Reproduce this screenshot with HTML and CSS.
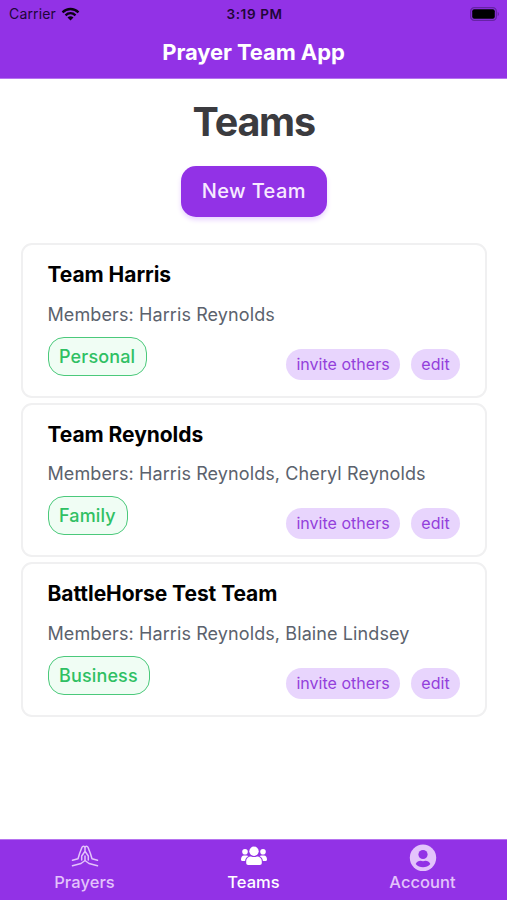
FILE: index.html
```html
<!DOCTYPE html>
<html lang="en">
<head>
<meta charset="utf-8">
<title>Prayer Team App</title>
<link rel="stylesheet" href="styles.css">
</head>
<body>
<header class="header">
  <div class="status">
    <div class="carrier"><span>Carrier</span>
      <svg class="wifi" viewBox="0 0 18 14"><path d="M1 5.3C5.6.9 12.4.9 17 5.3M4 8.3c3-2.8 7-2.8 10 0" fill="none" stroke="currentColor" stroke-width="2.3"/><path d="M6 10.5c1.8-1.6 4.2-1.6 6 0L9 13.5z" fill="currentColor"/></svg>
    </div>
    <span class="time">3:19 PM</span>
    <svg class="battery" viewBox="0 0 30 14"><rect x=".7" y=".7" width="25.6" height="12.6" rx="3.6" fill="none" stroke="#6623a5" stroke-width="1.3"/><rect x="2.2" y="2.2" width="22.6" height="9.6" rx="2" fill="#000"/><path d="M27.7 4.8c1.7.7 1.7 3.7 0 4.4z" fill="#6623a5"/></svg>
  </div>
  <div class="app-title"><span>Prayer Team App</span></div>
</header>
<main class="content">
  <h1 class="heading">Teams</h1>
  <button class="new-team">New Team</button>
  <section class="teams">
    <article class="card">
      <h2 class="name">Team Harris</h2>
      <p class="members">Members: Harris Reynolds</p>
      <div class="row"><span class="tag">Personal</span><div class="actions"><a class="pill">invite others</a><a class="pill">edit</a></div></div>
    </article>
    <article class="card">
      <h2 class="name">Team Reynolds</h2>
      <p class="members">Members: Harris Reynolds, Cheryl Reynolds</p>
      <div class="row"><span class="tag">Family</span><div class="actions"><a class="pill">invite others</a><a class="pill">edit</a></div></div>
    </article>
    <article class="card">
      <h2 class="name">BattleHorse Test Team</h2>
      <p class="members">Members: Harris Reynolds, Blaine Lindsey</p>
      <div class="row"><span class="tag">Business</span><div class="actions"><a class="pill">invite others</a><a class="pill">edit</a></div></div>
    </article>
  </section>
</main>
<nav class="tabs">
  <a class="tab">
    <svg class="icon" viewBox="0 0 28 28"><g fill="none" stroke="currentColor" stroke-width="1.5" stroke-linejoin="round" stroke-linecap="round"><path d="M1.500 17.200l5.500-1.400 1.600-5.300L11 4.300c.7-1.600 2.600-1.300 3 0 .4-1.300 2.300-1.600 3 0l2.400 6.200 1.600 5.300 5.500 1.400"/><path d="M1.500 22.800l8.500-2.300 4-3 4 3 8.500 2.300M14 4.800v3.500M14 17v-4M10.700 17v-4L14 8.300l3.300 4.700v4"/></g></svg>
    <span>Prayers</span>
  </a>
  <a class="tab active">
    <svg class="icon" viewBox="0 0 28 28"><g fill="currentColor" transform="translate(0 -1)"><circle cx="14" cy="9.300" r="4.700"/><circle cx="5" cy="9.700" r="2.800"/><circle cx="23" cy="9.700" r="2.800"/><path d="M6.200 21v-1.500c0-3.400 2.400-5 4.800-5 2 .8 4 .8 6 0 2.400 0 4.800 1.600 4.800 5V21c0 1.200-.8 2-2 2H8.200c-1.200 0-2-.8-2-2zM4 13.500h2.500c.8 0 1.400.2 2 .6-2 1.100-3.100 2.700-3.400 4.900H2.200c-.8 0-1.200-.5-1.200-1.200 0-2.400 1-4.300 3-4.300zM24 13.500h-2.500c-.8 0-1.400.2-2 .6 2 1.100 3.100 2.700 3.400 4.900h2.900c.8 0 1.200-.5 1.200-1.200 0-2.400-1-4.300-3-4.300z"/></g></svg>
    <span>Teams</span>
  </a>
  <a class="tab">
    <svg class="icon" viewBox="0 0 28 28"><circle cx="14" cy="14.800" r="13.200" fill="currentColor"/><circle cx="14" cy="11.500" r="4.600" fill="#9232e6"/><path d="M6.700 21c1-2 2.900-3.200 4.800-3.200 1.700.6 3.300.6 5 0 1.900 0 3.800 1.200 4.800 3.200-3.600 4.300-11 4.300-14.600 0z" fill="#9232e6"/></svg>
    <span>Account</span>
  </a>
</nav>
</body>
</html>
```
FILE: styles.css
```css
* { box-sizing: border-box; margin: 0; }
body {
  height: 900px;
  display: flex;
  flex-direction: column;
  background: #fff;
  font-family: Inter, "Liberation Sans", sans-serif;
  overflow: hidden;
}
.header { height: 79px; flex: none; background: #9232e6; border-bottom: 1px solid #b673f0; }
.status {
  height: 27px;
  padding: 0 7px 0 9px;
  display: grid;
  grid-template-columns: 1fr auto 1fr;
  align-items: center;
  font-size: 14px;
  color: #200638;
}
.carrier { display: flex; align-items: center; gap: 5px; letter-spacing: .15px; }
.wifi { width: 19px; height: 14px; color: #0b0213; }
.time { font-weight: 600; letter-spacing: .6px; font-size: 13.500px; }
.battery { width: 30px; height: 14px; justify-self: end; }
.app-title {
  height: 50px;
  display: flex;
  align-items: center;
  justify-content: center;
  color: #fff;
  font-size: 22px;
  font-weight: 700;
  letter-spacing: -.1px;
}
.content { flex: 1; padding: 0 20px 0 20.500px; display: flex; flex-direction: column; align-items: center; }
.heading { margin-top: 18px; font-size: 39.500px; line-height: 50px; font-weight: 700; letter-spacing: -1.200px; color: #3b3b3f; }
.new-team {
  margin-top: 19px;
  width: 146px;
  height: 51px;
  flex: none;
  border: 0;
  border-radius: 15px;
  background: #9232e6;
  color: #f7eaff;
  font: 500 20px/24px Inter, sans-serif;
  padding: 0 0 1px;
  letter-spacing: .4px;
  box-shadow: 0 3px 5px #e9d5ff;
}
.teams { align-self: stretch; margin-top: 26px; display: flex; flex-direction: column; gap: 5px; }
.card { height: 154.500px; padding: 17px 25px 0; border: 2px solid #f0f0f1; border-radius: 11px; }
.name { font-size: 21px; line-height: 26px; font-weight: 700; letter-spacing: -.06px; color: #000; }
.members { margin-top: 14.500px; font-size: 18px; line-height: 24px; letter-spacing: .1px; color: #5b626d; white-space: nowrap; }
.row { margin-top: 10.200px; display: flex; justify-content: space-between; align-items: flex-start; }
.tag {
  height: 39px;
  padding: 0 11px 0 10.500px;
  border: 1.500px solid #4bc97b;
  border-radius: 16px;
  background: #f0fdf4;
  color: #2fc063;
  font-size: 18px;
  font-weight: 500;
  line-height: 37px;
  letter-spacing: .14px;
}
.actions { display: flex; gap: 11px; margin-top: 12px; }
.pill {
  height: 31px;
  padding: 0 10.300px;
  border-radius: 16px;
  background: #e8d5fd;
  color: #9340db;
  font-size: 16px;
  line-height: 31px;
  letter-spacing: .03px;
}
.tabs { height: 61px; flex: none; display: grid; grid-template-columns: repeat(3, 1fr); background: #9232e6; border-top: 1px solid #b673f0; }
.tab { display: flex; flex-direction: column; align-items: center; padding-top: 3px; color: #e3c3fb; font-size: 16.500px; font-weight: 500; line-height: 22px; letter-spacing: .06px; }
.active { color: #fff; }
.icon { width: 28px; height: 28px; flex: none; }
```
